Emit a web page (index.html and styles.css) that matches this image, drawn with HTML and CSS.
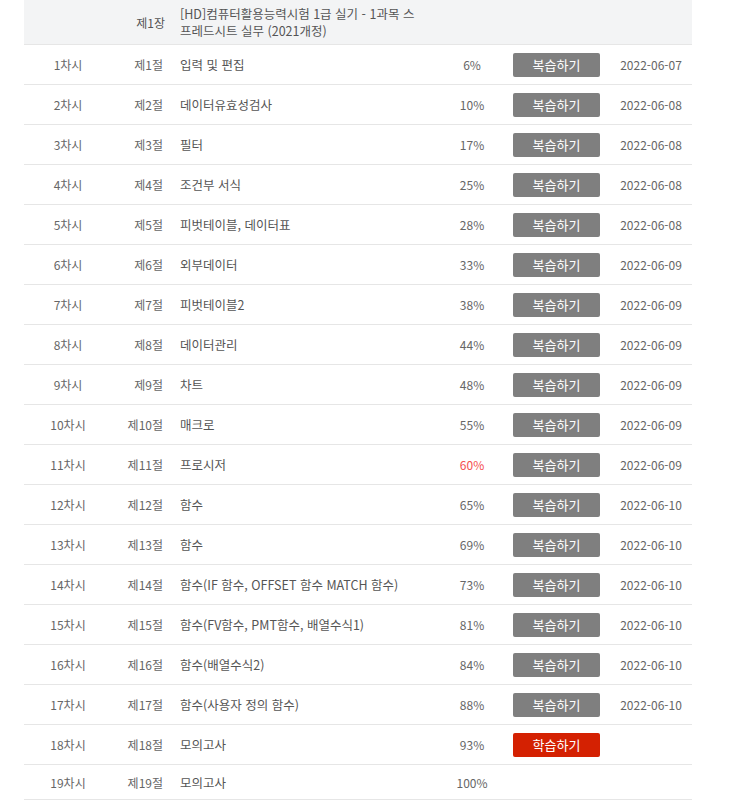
FILE: index.html
```html
<!DOCTYPE html>
<html lang="ko">
<head>
<meta charset="utf-8">
<link rel="stylesheet" href="styles.css">
</head>
<body>
<div class="table">
  <div class="row chapter">
    <div class="c1"></div>
    <div class="c2">제1장</div>
    <div class="c3">[HD]컴퓨터활용능력시험 1급 실기 - 1과목 스프레드시트 실무 (2021개정)</div>
    <div class="c4"></div>
    <div class="c5"></div>
    <div class="c6"></div>
  </div>
  <div class="row"><div class="c1">1차시</div><div class="c2">제1절</div><div class="c3">입력 및 편집</div><div class="c4">6%</div><div class="c5"><span class="btn">복습하기</span></div><div class="c6">2022-06-07</div></div>
  <div class="row"><div class="c1">2차시</div><div class="c2">제2절</div><div class="c3">데이터유효성검사</div><div class="c4">10%</div><div class="c5"><span class="btn">복습하기</span></div><div class="c6">2022-06-08</div></div>
  <div class="row"><div class="c1">3차시</div><div class="c2">제3절</div><div class="c3">필터</div><div class="c4">17%</div><div class="c5"><span class="btn">복습하기</span></div><div class="c6">2022-06-08</div></div>
  <div class="row"><div class="c1">4차시</div><div class="c2">제4절</div><div class="c3">조건부 서식</div><div class="c4">25%</div><div class="c5"><span class="btn">복습하기</span></div><div class="c6">2022-06-08</div></div>
  <div class="row"><div class="c1">5차시</div><div class="c2">제5절</div><div class="c3">피벗테이블, 데이터표</div><div class="c4">28%</div><div class="c5"><span class="btn">복습하기</span></div><div class="c6">2022-06-08</div></div>
  <div class="row"><div class="c1">6차시</div><div class="c2">제6절</div><div class="c3">외부데이터</div><div class="c4">33%</div><div class="c5"><span class="btn">복습하기</span></div><div class="c6">2022-06-09</div></div>
  <div class="row"><div class="c1">7차시</div><div class="c2">제7절</div><div class="c3">피벗테이블2</div><div class="c4">38%</div><div class="c5"><span class="btn">복습하기</span></div><div class="c6">2022-06-09</div></div>
  <div class="row"><div class="c1">8차시</div><div class="c2">제8절</div><div class="c3">데이터관리</div><div class="c4">44%</div><div class="c5"><span class="btn">복습하기</span></div><div class="c6">2022-06-09</div></div>
  <div class="row"><div class="c1">9차시</div><div class="c2">제9절</div><div class="c3">차트</div><div class="c4">48%</div><div class="c5"><span class="btn">복습하기</span></div><div class="c6">2022-06-09</div></div>
  <div class="row"><div class="c1">10차시</div><div class="c2">제10절</div><div class="c3">매크로</div><div class="c4">55%</div><div class="c5"><span class="btn">복습하기</span></div><div class="c6">2022-06-09</div></div>
  <div class="row"><div class="c1">11차시</div><div class="c2">제11절</div><div class="c3">프로시저</div><div class="c4 red">60%</div><div class="c5"><span class="btn">복습하기</span></div><div class="c6">2022-06-09</div></div>
  <div class="row"><div class="c1">12차시</div><div class="c2">제12절</div><div class="c3">함수</div><div class="c4">65%</div><div class="c5"><span class="btn">복습하기</span></div><div class="c6">2022-06-10</div></div>
  <div class="row"><div class="c1">13차시</div><div class="c2">제13절</div><div class="c3">함수</div><div class="c4">69%</div><div class="c5"><span class="btn">복습하기</span></div><div class="c6">2022-06-10</div></div>
  <div class="row"><div class="c1">14차시</div><div class="c2">제14절</div><div class="c3">함수(IF 함수, OFFSET 함수 MATCH 함수)</div><div class="c4">73%</div><div class="c5"><span class="btn">복습하기</span></div><div class="c6">2022-06-10</div></div>
  <div class="row"><div class="c1">15차시</div><div class="c2">제15절</div><div class="c3">함수(FV함수, PMT함수, 배열수식1)</div><div class="c4">81%</div><div class="c5"><span class="btn">복습하기</span></div><div class="c6">2022-06-10</div></div>
  <div class="row"><div class="c1">16차시</div><div class="c2">제16절</div><div class="c3">함수(배열수식2)</div><div class="c4">84%</div><div class="c5"><span class="btn">복습하기</span></div><div class="c6">2022-06-10</div></div>
  <div class="row"><div class="c1">17차시</div><div class="c2">제17절</div><div class="c3">함수(사용자 정의 함수)</div><div class="c4">88%</div><div class="c5"><span class="btn">복습하기</span></div><div class="c6">2022-06-10</div></div>
  <div class="row"><div class="c1">18차시</div><div class="c2">제18절</div><div class="c3">모의고사</div><div class="c4">93%</div><div class="c5"><span class="btn btn-red">학습하기</span></div><div class="c6"></div></div>
  <div class="row short"><div class="c1">19차시</div><div class="c2">제19절</div><div class="c3">모의고사</div><div class="c4">100%</div><div class="c5"></div><div class="c6"></div></div>
</div>
</body>
</html>
```

FILE: styles.css
```css
html, body {
  margin: 0;
  padding: 0;
  background: #fff;
}
body {
  font-family: "Noto Sans CJK KR", "Noto Sans", sans-serif;
  font-size: 12px;
  color: #666;
}
.table {
  margin-left: 24px;
  width: 668px;
}
.row {
  display: grid;
  grid-template-columns: 88px 59px 269px 64px 106px 82px;
  align-items: center;
  min-height: 39px;
  border-bottom: 1px solid #e6e6e6;
  line-height: 17px;
}
.row.short {
  min-height: 34px;
}
.row.chapter {
  background: #f3f4f5;
  min-height: 44px;
  color: #555;
}
.c1 { text-align: center; }
.c2 { text-align: right; padding-right: 8px; }
.chapter .c2 { padding-right: 6px; }
.c3 {
  padding-left: 9px;
  color: #555;
  font-size: 12.5px;
}
.chapter .c3 { padding-right: 24px; }
.c4 { text-align: center; }
.c4.red { color: #f4504f; }
.c5 { padding-left: 9px; display: flex; }
.c6 { text-align: center; }
.btn {
  display: inline-block;
  width: 87px;
  height: 24px;
  line-height: 24px;
  text-align: center;
  background: #7f7f7f;
  color: #fff;
  font-size: 13px;
  border-radius: 2px;
}
.btn-red {
  background: #d42102;
}
```
